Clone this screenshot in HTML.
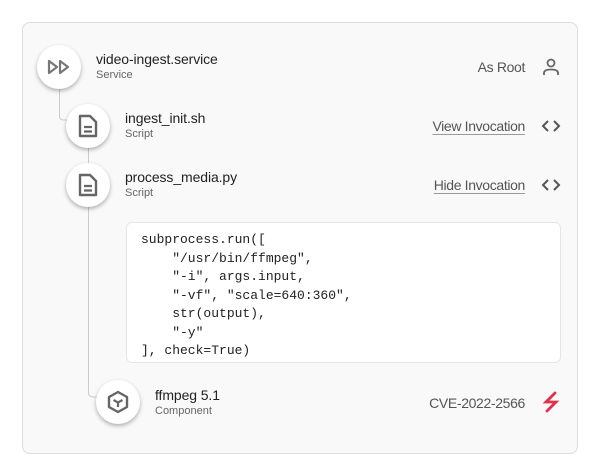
<!DOCTYPE html>
<html><head><style>
body{margin:0;width:600px;height:476px;background:#fff;font-family:"Liberation Sans",sans-serif;position:relative;overflow:hidden}
.card{position:absolute;left:22px;top:22px;width:554px;height:430px;background:#f9f9f9;border:1px solid #dedede;border-radius:8px}
.c{position:absolute;width:44px;height:44px;border-radius:50%;background:#fff;box-shadow:0 2px 4px rgba(0,0,0,.3);display:flex;align-items:center;justify-content:center}
.t{position:absolute;font-size:14px;color:#222;letter-spacing:-0.1px}
.s{position:absolute;font-size:11px;color:#666}
.r{position:absolute;font-size:14px;color:#555;right:75px;text-align:right;letter-spacing:-0.35px}
.u{text-decoration:underline;text-decoration-color:#999;text-underline-offset:3px}
.ic{position:absolute;left:540px}
pre{position:absolute;left:126px;top:222px;width:435px;height:141px;margin:0;box-sizing:border-box;background:#fff;border:1px solid #e6e6e6;border-radius:6px;padding:8px 14px;font-family:"Liberation Mono",monospace;font-size:13px;line-height:18.5px;color:#222}
</style></head><body>
<div class="card"></div>
<svg style="position:absolute;left:0;top:0" width="600" height="476"><path d="M59.5 88 V116 Q59.5 120 64 120 H70 M88.5 148 V392 Q88.5 397 93 397 H100" fill="none" stroke="#ccc" stroke-width="1"/></svg>
<div class="c" style="left:37px;top:45px"><svg width="24" height="16" viewBox="0 0 24 16"><path d="M2 2 L10 8 L2 14Z M13 2 L21 8 L13 14Z" fill="none" stroke="#777" stroke-width="2.2" stroke-linejoin="round"/></svg></div>
<div class="c" style="left:66px;top:104px"><svg width="20" height="24" viewBox="0 0 20 24"><path d="M2 2 H12 L18 8 V22 H2Z" fill="none" stroke="#666" stroke-width="2.4" stroke-linejoin="round"/><path d="M6 13 H14 M6 17.5 H14" stroke="#666" stroke-width="2.2"/></svg></div>
<div class="c" style="left:66px;top:163px"><svg width="20" height="24" viewBox="0 0 20 24"><path d="M2 2 H12 L18 8 V22 H2Z" fill="none" stroke="#666" stroke-width="2.4" stroke-linejoin="round"/><path d="M6 13 H14 M6 17.5 H14" stroke="#666" stroke-width="2.2"/></svg></div>
<div class="c" style="left:96px;top:380px"><svg width="24" height="24" viewBox="0 0 24 24"><path d="M12 2 L21 7 V17 L12 22 L3 17 V7Z" fill="none" stroke="#666" stroke-width="2.4" stroke-linejoin="round"/><path d="M7.5 10 L12 12.5 L16.5 10 M12 12.5 V17" fill="none" stroke="#666" stroke-width="2.2"/></svg></div>
<div class="t" style="left:96px;top:51px">video-ingest.service</div><div class="s" style="left:96px;top:69px">Service</div>
<div class="t" style="left:125px;top:110px">ingest_init.sh</div><div class="s" style="left:125px;top:128px">Script</div>
<div class="t" style="left:125px;top:169px">process_media.py</div><div class="s" style="left:125px;top:187px">Script</div>
<div class="t" style="left:155px;top:387px">ffmpeg 5.1</div><div class="s" style="left:155px;top:405px">Component</div>
<div class="r" style="top:59px">As Root</div>
<div class="r u" style="top:118px">View Invocation</div>
<div class="r u" style="top:177px">Hide Invocation</div>
<div class="r" style="top:395px">CVE-2022-2566</div>
<svg class="ic" style="top:57px" width="22" height="20" viewBox="0 0 22 20"><circle cx="11" cy="6" r="3.5" fill="none" stroke="#666" stroke-width="1.8"/><path d="M4 18 V16 Q4 12.5 11 12.5 Q18 12.5 18 16 V18" fill="none" stroke="#666" stroke-width="1.8"/></svg>
<svg class="ic" style="top:119px" width="22" height="14" viewBox="0 0 22 14"><path d="M8 2 L3 7 L8 12 M14 2 L19 7 L14 12" fill="none" stroke="#555" stroke-width="2"/></svg>
<svg class="ic" style="top:178px" width="22" height="14" viewBox="0 0 22 14"><path d="M8 2 L3 7 L8 12 M14 2 L19 7 L14 12" fill="none" stroke="#555" stroke-width="2"/></svg>
<svg class="ic" style="top:391px" width="22" height="22" viewBox="0 0 22 22"><path d="M15 2 L6 11 L16 11 L7 20" fill="none" stroke="#e0304a" stroke-width="2.8" stroke-linejoin="miter" stroke-linecap="round"/></svg>
<pre>subprocess.run([
    "/usr/bin/ffmpeg",
    "-i", args.input,
    "-vf", "scale=640:360",
    str(output),
    "-y"
], check=True)</pre>
</body></html>
